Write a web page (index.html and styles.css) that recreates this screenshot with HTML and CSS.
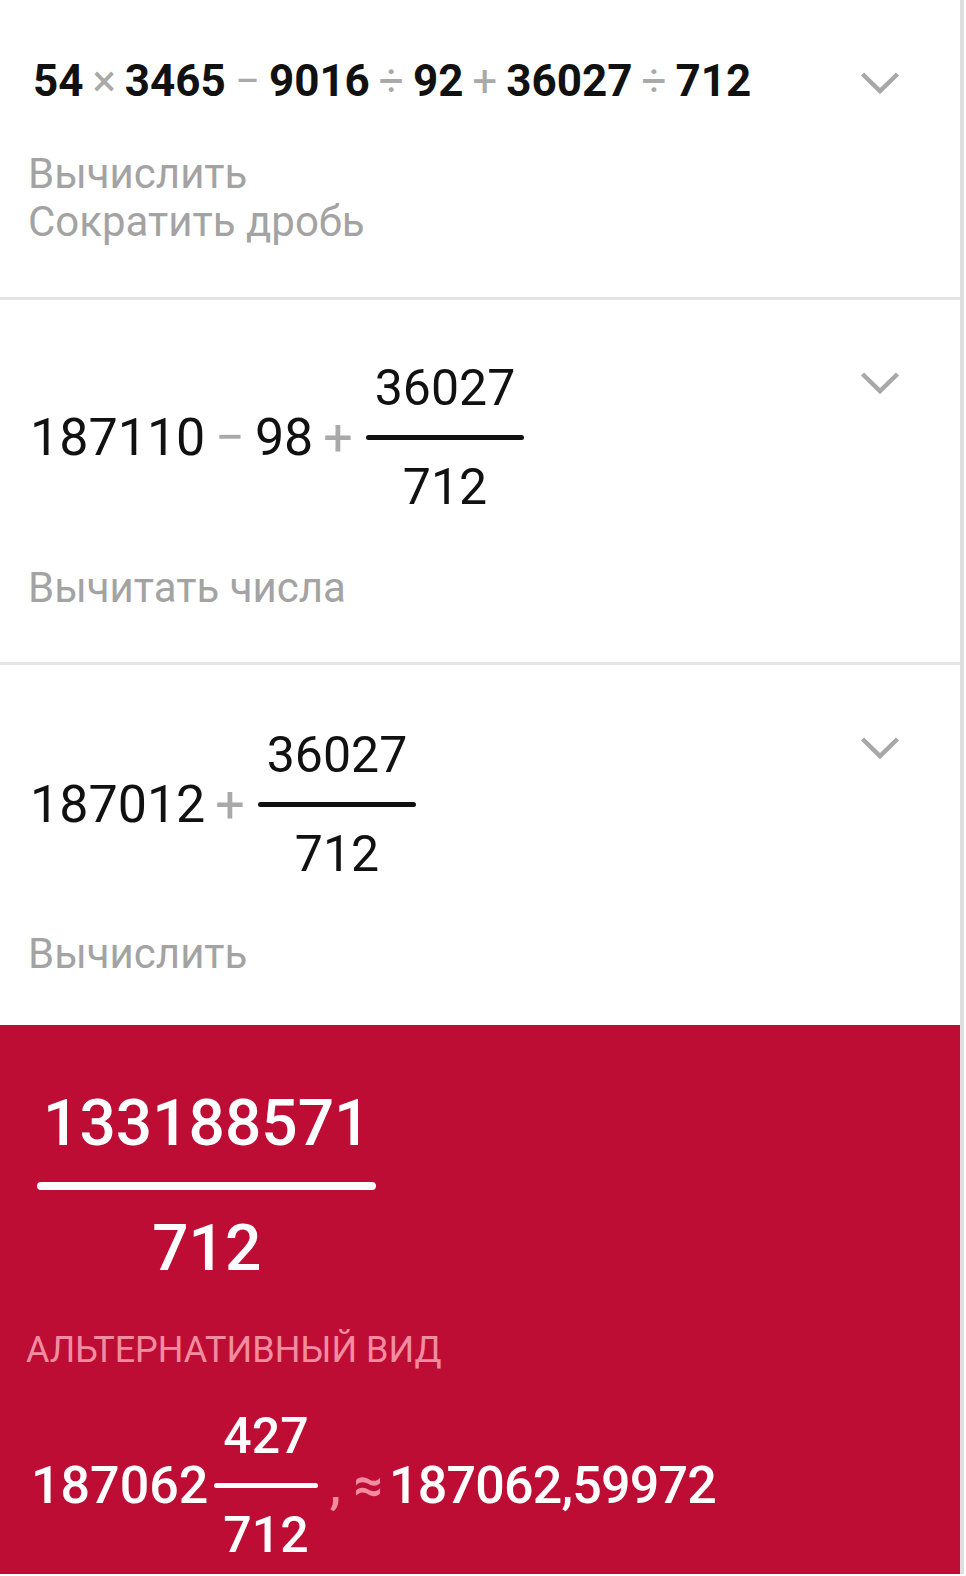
FILE: index.html
```html
<!DOCTYPE html>
<html lang="ru">

<head>
    <meta charset="utf-8" />
    <meta name="viewport" content="width=device-width, initial-scale=1.0">
    <title>Решение</title>
    <link rel="stylesheet" href="styles.css">
</head>

<body>
    <div class="page">
        <!-- Шаг 1 -->
        <section class="step step-first">
            <div class="step-row">
                <div class="expr expr-bold">54 <span class="op">×</span> 3465 <span class="op">−</span> 9016 <span class="op">÷</span> 92 <span class="op">+</span> 36027 <span class="op">÷</span> 712</div>
                <svg class="chevron" viewBox="0 0 40 24" width="40" height="24">
                    <polyline points="2.5,3 20,20 37.5,3" />
                </svg>
            </div>
            <div class="hints hints-first">
                <div>Вычислить</div>
                <div>Сократить дробь</div>
            </div>
        </section>

        <!-- Шаг 2 -->
        <section class="step step-second">
            <div class="step-row">
                <div class="expr-line">
                    <span class="expr">187110 <span class="op">−</span> 98 <span class="op">+</span></span>
                    <div class="frac">
                        <div class="frac-num">36027</div>
                        <div class="frac-bar"></div>
                        <div class="frac-num">712</div>
                    </div>
                </div>
                <svg class="chevron chevron-frac" viewBox="0 0 40 24" width="40" height="24">
                    <polyline points="2.5,3 20,20 37.5,3" />
                </svg>
            </div>
            <div class="hints">
                <div>Вычитать числа</div>
            </div>
        </section>

        <!-- Шаг 3 -->
        <section class="step step-last">
            <div class="step-row">
                <div class="expr-line">
                    <span class="expr">187012 <span class="op">+</span></span>
                    <div class="frac">
                        <div class="frac-num">36027</div>
                        <div class="frac-bar"></div>
                        <div class="frac-num">712</div>
                    </div>
                </div>
                <svg class="chevron chevron-frac" viewBox="0 0 40 24" width="40" height="24">
                    <polyline points="2.5,3 20,20 37.5,3" />
                </svg>
            </div>
            <div class="hints">
                <div>Вычислить</div>
            </div>
        </section>

        <!-- Ответ -->
        <section class="answer">
            <div class="answer-frac">
                <div class="answer-num">133188571</div>
                <div class="answer-bar"></div>
                <div class="answer-num">712</div>
            </div>
            <div class="answer-label">АЛЬТЕРНАТИВНЫЙ ВИД</div>
            <div class="alt-line">
                <span class="alt-whole">187062</span>
                <div class="frac alt-frac">
                    <div class="frac-num">427</div>
                    <div class="frac-bar"></div>
                    <div class="frac-num">712</div>
                </div>
                <span class="alt-sep">,</span>
                <span class="alt-sep alt-approx">≈</span>
                <span class="alt-decimal">187062,59972</span>
            </div>
        </section>
    </div>
</body>

</html>
```

FILE: styles.css
```css
/* Общие настройки */
body {
    margin: 0;
    background-color: #fff;
    font-family: Roboto, "Noto Sans", sans-serif;
    color: #111;
}

.page {
    width: 960px;
    border-right: 4px solid #dedede;
}

/* Шаги решения */
.step {
    padding: 63px 0 50px 26px;
    border-bottom: 3px solid #e4e4e4;
}

.step-first {
    padding-top: 53px;
    padding-bottom: 51px;
}

.step-second .hints {
    margin-top: 52px;
}

.step-last {
    padding-top: 65px;
    padding-bottom: 47px;
    border-bottom: none;
}

.step-last .hints {
    margin-top: 51px;
}

.step-row {
    display: flex;
    justify-content: space-between;
    align-items: flex-start;
}

.expr {
    font-size: 52px;
    line-height: 56px;
    white-space: pre;
    word-spacing: -3px;
    margin-left: 4px;
}

.expr-bold {
    font-size: 44px;
    font-weight: 700;
    word-spacing: -2px;
    margin-left: 7px;
}

/* Знаки операций */
.op {
    color: #a9a9a9;
    font-weight: 400;
}

.expr-line {
    display: flex;
    align-items: center;
}

/* Дробь */
.frac {
    display: flex;
    flex-direction: column;
    margin-left: 13px;
}

.frac-num {
    font-size: 50px;
    line-height: 50px;
    text-align: center;
    padding: 0 9px;
}

.frac-bar {
    height: 5px;
    margin: 22px 0;
    background-color: #111;
    border-radius: 3px;
}

/* Стрелка раскрытия */
.chevron {
    margin-top: 18px;
    margin-right: 60px;
    fill: none;
    stroke: #a8a8a8;
    stroke-width: 4.5;
    flex-shrink: 0;
}

.chevron-frac {
    margin-top: 8px;
}

.step-last .chevron-frac {
    margin-top: 6px;
}

/* Подсказки */
.hints {
    margin-top: 49px;
    margin-left: 2px;
    font-size: 42px;
    line-height: 48px;
    color: #a3a3a3;
}

.hints-first {
    margin-top: 41px;
}

/* Блок ответа */
.answer {
    background-color: #be0d34;
    color: #fff;
    padding: 67px 0 14px 26px;
}

.answer-frac {
    display: inline-flex;
    flex-direction: column;
    margin-left: 11px;
}

.answer-num {
    font-size: 64px;
    line-height: 64px;
    font-weight: 500;
    text-align: center;
    padding: 0 6px;
}

.answer-bar {
    height: 8px;
    margin: 26px 0 27px;
    background-color: #fff;
    border-radius: 4px;
}

.answer-label {
    margin-top: 47px;
    font-size: 36px;
    line-height: 44px;
    color: #f28ca0;
}

.alt-line {
    display: flex;
    align-items: center;
    margin-top: 39px;
    font-size: 52px;
    line-height: 56px;
    font-weight: 500;
}

.alt-whole {
    margin-left: 5px;
}

.alt-frac {
    margin-left: 6px;
}

.alt-frac .frac-num {
    font-weight: 500;
}

.alt-frac .frac-bar {
    background-color: #fff;
}

.alt-sep {
    color: #f28ca0;
    margin-left: 12px;
}

.alt-approx {
    margin-left: 12px;
}

.alt-decimal {
    margin-left: 6px;
    letter-spacing: -0.8px;
}
```
